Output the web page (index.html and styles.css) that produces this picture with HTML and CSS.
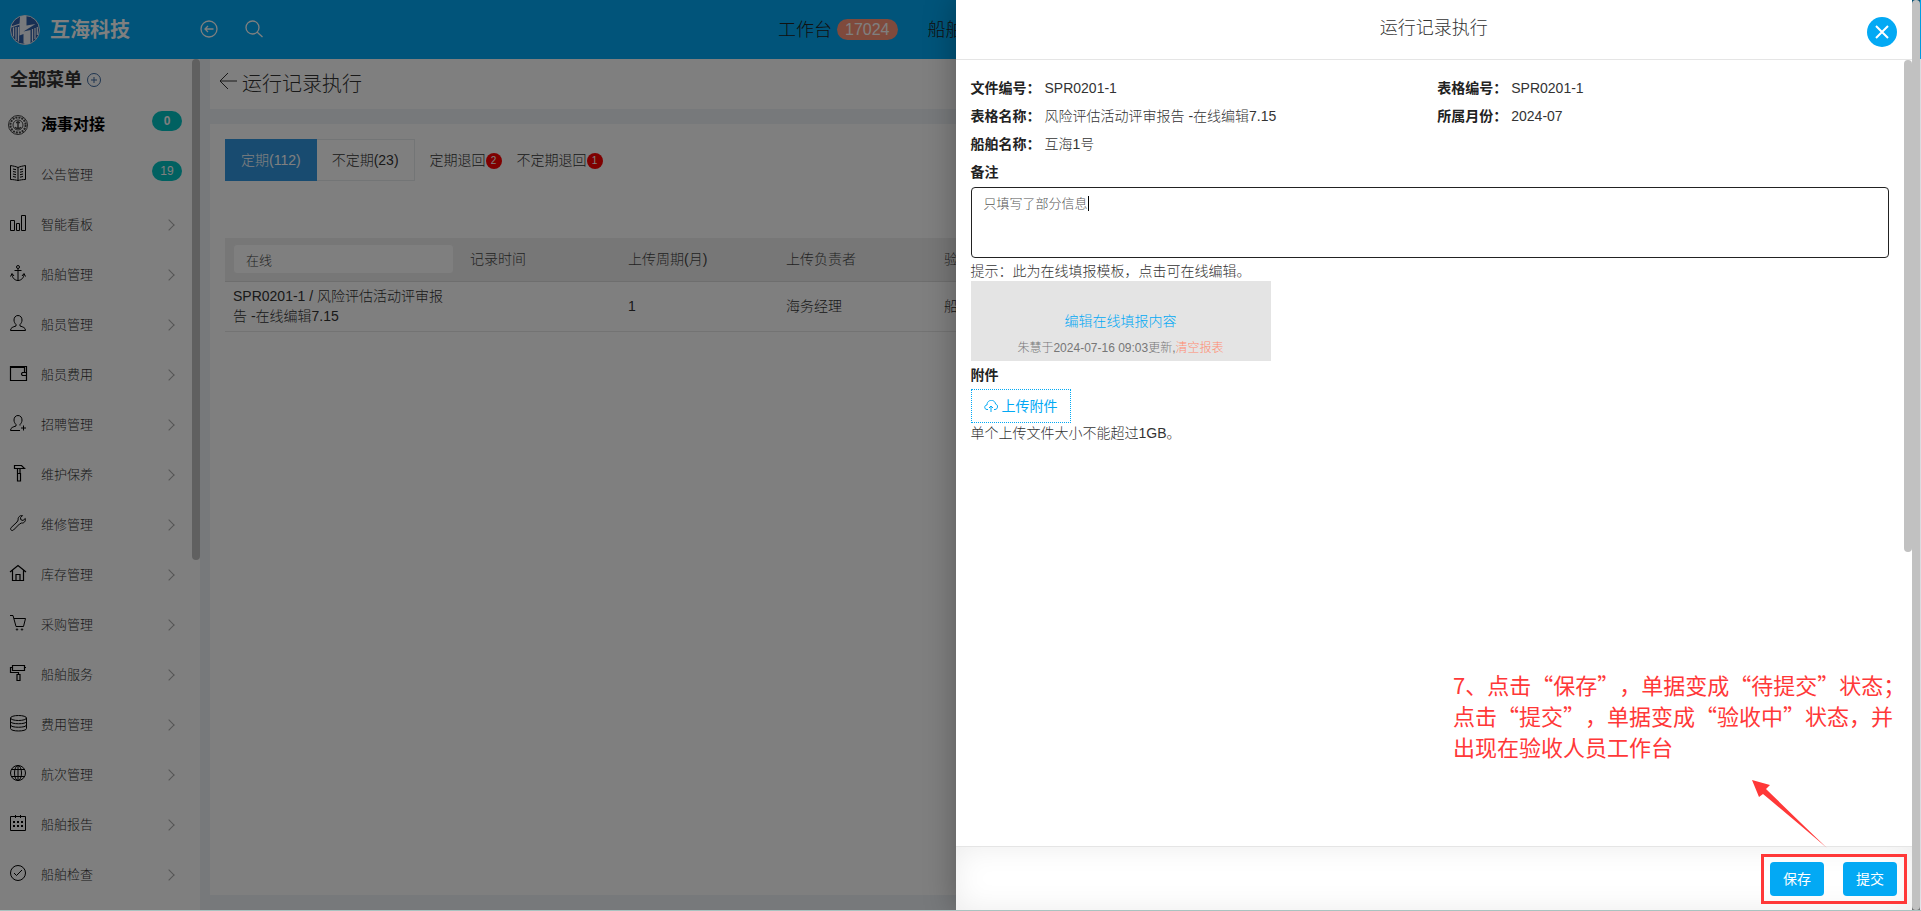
FILE: index.html
```html
<!DOCTYPE html>
<html lang="zh-CN">
<head>
<meta charset="utf-8">
<title>运行记录执行</title>
<link rel="stylesheet" href="styles.css">
</head>
<body>
<div class="app">
  <header class="topbar">
    <a class="brand" href="#">
      <svg class="brand-logo" viewBox="0 0 30 30" aria-hidden="true">
        <circle cx="15" cy="15" r="14.500" fill="#2f5fa8" stroke="#e3e8f0"/>
        <path d="M10 1.500Q13 .5 16.500 1v9.500l9-1.500-12 7.500L20.500 15v13.500Q17 30 13.500 28.500V19l-4 1.500V10z" fill="#f2f5fa"/>
        <path d="M1 12l9-3M3.500 12.500v9M6 12v13M8.500 12v14.500M22.500 14v12.500M25 13v11M27.300 12v8" stroke="#f2f5fa" stroke-width="1.200" fill="none"/>
      </svg>
      <span class="brand-name">互海科技</span>
    </a>
    <button class="top-btn" aria-label="收起菜单"><svg viewBox="0 0 18 18"><circle cx="9" cy="9" r="8"/><path d="M13.500 9H5M8 6L5 9l3 3"/></svg></button>
    <button class="top-btn" aria-label="搜索"><svg viewBox="0 0 18 18"><circle cx="7.500" cy="7.500" r="6.500"/><path d="M12 12l5.500 5"/></svg></button>
    <nav class="top-nav">
      <a href="#">工作台 <span class="pill">17024</span></a>
      <a href="#">船舶</a>
    </nav>
  </header>

  <div class="workspace">
    <aside class="sidebar">
      <div class="menu-head"><h2>全部菜单</h2>
        <button class="add-btn" aria-label="添加"><svg viewBox="0 0 14 14"><circle cx="7" cy="7" r="6.500"/><path d="M7 4v6M4 7h6"/></svg></button>
      </div>
      <ul class="menu">
        <li><a class="menu-item is-strong" href="#"><svg class="seal" viewBox="0 0 20 20"><circle cx="10" cy="10" r="9.500"/><circle cx="10" cy="10" r="7.600" stroke-dasharray="2 1" stroke-width="2"/><circle cx="10" cy="10" r="5"/><path d="M10 6v7M8 7.500h4M7 12c1 2 5 2 6 0" stroke-width="1.500"/></svg><span>海事对接</span><b class="count">0</b></a></li>
        <li><a class="menu-item" href="#"><svg viewBox="0 0 16 16"><path d="M8 2.500C6 1.500 3 1 .5 .5v14c3 0 5.500.5 7.500 1 2-.5 4.500-1 7.500-1V.5C13 1 10 1.500 8 2.500zM8 2.500v13M3 4l3 .7M3 6.500l3 .7M3 9l3 .7M3 11.500l3 .7M13 4l-3 .7M13 6.500l-3 .7M13 9l-3 .7M13 11.500l-3 .7"/></svg><span>公告管理</span><b class="count">19</b></a></li>
        <li><a class="menu-item" href="#"><svg viewBox="0 0 16 16"><path d="M.5 5.500h4v10h-4zM6.500 8.500h3v7h-3zM11.500.5h4v15h-4z"/></svg><span>智能看板</span><i class="chevron"></i></a></li>
        <li><a class="menu-item" href="#"><svg viewBox="0 0 16 16"><circle cx="8" cy="2" r="1.500"/><path d="M8 3.500v12M4.500 5.500h7M.5 11.500l1.500-3 2 2.500M15.500 11.500l-1.500-3-2 2.500M2 9c0 4 3 6.500 6 6.500s6-2.500 6-6.500"/></svg><span>船舶管理</span><i class="chevron"></i></a></li>
        <li><a class="menu-item" href="#"><svg viewBox="0 0 16 16"><path d="M8 .5C5.500.5 4 2.500 4 5c0 2 1 3.500 2 4.500v1.500c-3 1-5.500 1.500-5.500 4.500h15c0-3-2.500-3.500-5.500-4.500V9.500c1-1 2-2.500 2-4.500C12 2.500 10.500.5 8 .5z"/></svg><span>船员管理</span><i class="chevron"></i></a></li>
        <li><a class="menu-item" href="#"><svg viewBox="0 0 16 16"><path d="M.5 2.500V1.500h16v14H.5v-13h14v5M17 7.500h-4.500q-2 1.500 0 3h3.500" stroke-width="1.200"/></svg><span>船员费用</span><i class="chevron"></i></a></li>
        <li><a class="menu-item" href="#"><svg viewBox="0 0 16 16"><path d="M10 15.500H.5c0-3 2.500-3.500 5.500-4.500V9.500C5 8.500 4 7 4 5 4 2.500 5.500.5 8 .5S12 2.500 12 5c0 2-1 3.500-2 4.500v1M13.500 10.500v5M11 13h5"/></svg><span>招聘管理</span><i class="chevron"></i></a></li>
        <li><a class="menu-item" href="#"><svg viewBox="0 0 16 16"><path d="M4.500.5h7l3 3H4.500zM7.500 3.500v5h2.500v-5M7.500 8.500h3v7.500h-3z" stroke-width="1.200"/></svg><span>维护保养</span><i class="chevron"></i></a></li>
        <li><a class="menu-item" href="#"><svg viewBox="0 0 16 16"><path d="M12.500.6C10 0 7.500 2.500 8.200 5L7 7l-5.800 5.500c-1.800 2 .8 4 2.300 2.500l6-6L11.500 8c2.500.5 4.500-2 3.800-4.500L13 5.500l-2.200-.8-.3-2z"/></svg><span>维修管理</span><i class="chevron"></i></a></li>
        <li><a class="menu-item" href="#"><svg viewBox="0 0 16 16"><path d="M0 7L8 .5 16 7M2.500 5.500v10h11v-10M6 15.500v-6h4v6" stroke-width="1.200"/></svg><span>库存管理</span><i class="chevron"></i></a></li>
        <li><a class="menu-item" href="#"><svg viewBox="0 0 16 16"><path d="M0 .5h3l3 11h7.500l2-8H4"/><circle cx="7" cy="14.500" r=".7"/><circle cx="12" cy="14.500" r=".7"/></svg><span>采购管理</span><i class="chevron"></i></a></li>
        <li><a class="menu-item" href="#"><svg viewBox="0 0 16 16"><path d="M2.500.5h12v5h-12zM14.500 2.500H16M2.500 2.500h-2v5h8v2M7 9.500h3v6H7z" stroke-width="1.200"/></svg><span>船舶服务</span><i class="chevron"></i></a></li>
        <li><a class="menu-item" href="#"><svg viewBox="0 0 16 16"><ellipse cx="8.500" cy="3" rx="8" ry="2.500"/><path d="M.5 3v10.500c0 3.300 16 3.300 16 0V3M.5 6.500c0 3 16 3 16 0M.5 10c0 3 16 3 16 0"/></svg><span>费用管理</span><i class="chevron"></i></a></li>
        <li><a class="menu-item" href="#"><svg viewBox="0 0 16 16"><circle cx="8" cy="8" r="7.500"/><ellipse cx="8" cy="8" rx="3.500" ry="7.500"/><path d="M8 .5v15M1.500 4.500h13M1.500 11.500h13"/></svg><span>航次管理</span><i class="chevron"></i></a></li>
        <li><a class="menu-item" href="#"><svg viewBox="0 0 16 16"><path d="M.5 1.500h15v14H.5zM5.500 0v3M10.500 0v3"/><path d="M3 7h2M7 7h2M11 7h2M3 11h2M7 11h2M11 11h2" stroke-width="2"/></svg><span>船舶报告</span><i class="chevron"></i></a></li>
        <li><a class="menu-item" href="#"><svg viewBox="0 0 16 16"><circle cx="8" cy="8" r="7.500"/><path d="M4 8l2.500 2.500 5.500-5.500"/></svg><span>船舶检查</span><i class="chevron"></i></a></li>
      </ul>
      <span class="thumb thumb-menu"></span>
    </aside>

    <main class="content">
      <section class="card title-card">
        <a class="back" href="#" aria-label="返回"><svg viewBox="0 0 18 18"><path d="M18 9H1M9 1L1 9l8 8"/></svg></a>
        <h1>运行记录执行</h1>
      </section>
      <section class="card list-card">
        <div class="tabs">
          <button class="tab is-active">定期(112)</button>
          <button class="tab">不定期(23)</button>
          <a class="tab-link" href="#">定期退回<b>2</b></a>
          <a class="tab-link" href="#">不定期退回<b>1</b></a>
        </div>
        <table class="grid">
          <colgroup><col class="col-name"><col class="col"><col class="col"><col class="col"><col></colgroup>
          <thead><tr>
            <th><input type="text" value="在线" aria-label="表格名称"></th>
            <th>记录时间</th><th>上传周期(月)</th><th>上传负责者</th><th>验收</th>
          </tr></thead>
          <tbody><tr>
            <td>SPR0201-1 / 风险评估活动评审报告 -在线编辑7.15</td>
            <td></td><td>1</td><td>海务经理</td><td>船舶</td>
          </tr></tbody>
        </table>
      </section>
    </main>
  </div>

  <div class="backdrop"></div>

  <section class="drawer" role="dialog" aria-labelledby="drawer-title">
    <header class="drawer-head">
      <h2 id="drawer-title">运行记录执行</h2>
      <button class="close" aria-label="关闭"><svg viewBox="0 0 14 14"><path d="M1 1l12 12M13 1L1 13"/></svg></button>
    </header>
    <div class="drawer-body">
      <dl class="facts">
        <div><dt>文件编号：</dt><dd>SPR0201-1</dd></div>
        <div><dt>表格编号：</dt><dd>SPR0201-1</dd></div>
        <div><dt>表格名称：</dt><dd>风险评估活动评审报告 -在线编辑7.15</dd></div>
        <div><dt>所属月份：</dt><dd>2024-07</dd></div>
        <div><dt>船舶名称：</dt><dd>互海1号</dd></div>
      </dl>
      <label class="field-label" for="remark">备注</label>
      <div class="remark-wrap">
        <textarea id="remark" class="remark">只填写了部分信息</textarea>
        <span class="caret"></span>
      </div>
      <p class="hint">提示：此为在线填报模板，点击可在线编辑。</p>
      <div class="report">
        <a class="report-edit" href="#">编辑在线填报内容</a>
        <p>朱慧于2024-07-16 09:03更新,<a class="report-clear" href="#">清空报表</a></p>
      </div>
      <h3 class="field-label">附件</h3>
      <button class="upload"><svg viewBox="0 0 14 12"><path d="M4 9.500H3C0 9.500 0 5 3 5c0-6 8-6 8.500-1 3 .5 2.500 5.500-.5 5.500h-1M7 12V6M5 8l2-2 2 2"/></svg>上传附件</button>
      <p class="limit">单个上传文件大小不能超过1GB。</p>
      <span class="thumb thumb-drawer"></span>
    </div>
    <footer class="drawer-foot">
      <button class="primary">保存</button>
      <button class="primary">提交</button>
    </footer>
    <p class="note">7、点击“保存”，单据变成“待提交”状态；<br>点击“提交”，单据变成“验收中”状态，并<br>出现在验收人员工作台</p>
    <svg class="note-arrow" viewBox="0 0 75 69" aria-hidden="true"><path d="M0 0L18 5l-4 4Q48 42 75 68Q40 38 11 14l-4 3z"/></svg>
    <span class="note-frame"></span>
  </section>
  <span class="thumb thumb-page"></span>
</div>
</body>
</html>
```

FILE: styles.css
```css
* { box-sizing: border-box; }

body {
  margin: 0;
  font: 300 14px/20px "Liberation Sans", "Noto Sans CJK SC", sans-serif;
  color: #333;
}

h1, h2, h3, p, ul, dl, dd { margin: 0; padding: 0; }
a { color: inherit; text-decoration: none; }
button, input, textarea { font: inherit; color: inherit; }
button { padding: 0; border: 0; background: none; cursor: pointer; }
svg { display: block; fill: none; stroke: currentColor; }

.app {
  position: relative;
  display: flex;
  flex-direction: column;
  height: 100vh;
  overflow: hidden;
  border-bottom: 1px solid #a9c3c0;
}

/* top bar */
.topbar {
  display: flex;
  align-items: center;
  flex: none;
  height: 59px;
  padding: 0 10px;
  background: #03a9f4;
  color: #fff;
}
.brand { display: flex; align-items: center; gap: 10px; width: 190px; }
.brand-logo { width: 30px; height: 30px; stroke: none; }
.brand-name { font-size: 20px; font-weight: 700; line-height: 30px; }
.top-btn { width: 18px; margin: 0 27px 2px 0; stroke-width: 1.3; }
.top-nav {
  display: flex;
  gap: 30px;
  margin-left: 488px;
  font-size: 18px;
  line-height: 30px;
  color: #222;
}
.top-nav a { display: flex; align-items: center; gap: 5px; }
.pill {
  padding: 0 8px;
  border-radius: 12px;
  background: #ff9478;
  color: #fff;
  font-size: 16px;
  font-weight: 400;
  line-height: 21px;
}

/* side menu */
.workspace { display: flex; flex: 1; min-height: 0; background: #eff2f7; }
.sidebar { position: relative; flex: none; width: 200px; overflow: hidden; background: #fff; }
.menu-head { display: flex; align-items: center; gap: 5px; height: 41px; padding: 1px 10px 0; }
.menu-head h2 { font-size: 18px; line-height: 24px; }
.add-btn { width: 14px; color: #3f6aa0; }
.menu { list-style: none; }
.menu-item { display: flex; align-items: center; height: 50px; padding: 0 25px 0 10px; font-size: 13px; color: #333; }
.menu-item svg { width: 16px; height: 16px; margin: 0 15px 5px 0; overflow: visible; color: #000; }
.menu-item span { flex: 1; }
.is-strong { padding-left: 8px; font-size: 16px; font-weight: 700; color: #000; }
.is-strong .seal { width: 20px; height: 20px; margin: 0 13px 0 0; color: #444; }
.count {
  width: 30px;
  margin: 0 -7px 9px 0;
  border-radius: 10px;
  background: #03c2c2;
  color: #fff;
  font-size: 12px;
  line-height: 20px;
  text-align: center;
}
.chevron { width: 8px; height: 8px; margin-right: 2px; border: solid #aaa; border-width: 1px 1px 0 0; transform: rotate(45deg); }

.thumb { position: absolute; width: 8px; border-radius: 4px; background: #c1c1c1; }
.thumb-menu { top: 0; right: 0; height: 501px; }
.thumb-drawer { top: 0; right: 0; height: 492px; }
.thumb-page { top: 0; right: 1px; bottom: 0; }

/* content */
.content { display: flex; flex: 1; flex-direction: column; gap: 15px; min-width: 0; padding: 0 19px 15px 10px; }
.card { background: #fff; }
.title-card { display: flex; align-items: center; gap: 5px; height: 50px; padding: 0 9px; }
.title-card h1 { font-size: 20px; font-weight: 300; line-height: 30px; }
.back { width: 18px; margin-bottom: 6px; }
.list-card { flex: 1; padding: 15px; }
.tabs { display: flex; align-items: center; height: 42px; margin-bottom: 57px; }
.tab { height: 42px; padding: 0 15px; border: 1px solid #e7eaec; border-left: 0; }
.tab.is-active { padding: 0 16px; border: 0; background: #3097e1; color: #fff; }
.tab-link { display: flex; align-items: center; margin-left: 15px; }
.tab-link b {
  width: 16px;
  margin-top: 2px;
  border-radius: 8px;
  background: #f00;
  color: #fff;
  font-size: 10px;
  line-height: 16px;
  text-align: center;
}

.grid { width: 100%; border-collapse: collapse; table-layout: fixed; text-align: left; }
.col-name { width: 237px; }
.col { width: 158px; }
.grid th { height: 43px; padding: 0 8px; border-bottom: 1px solid #ddd; background: #efefef; font-weight: 300; color: #444; }
.grid td { height: 50px; padding: 4px 8px 5px; border-bottom: 1px solid #e7e7e7; }
.grid th input { display: block; width: 100%; height: 30px; padding: 0 12px; border: 1px solid #eee; border-radius: 4px; background: #fff; font-size: 13px; }

.backdrop { position: absolute; inset: 0 1px 0 0; background: rgba(0, 0, 0, .5); }

/* drawer */
.drawer {
  position: absolute;
  top: 0;
  right: 9px;
  bottom: 0;
  display: flex;
  flex-direction: column;
  width: 50%;
  max-width: calc(50% - 4px);
  background: #fff;
  box-shadow: 0 0 30px rgba(0, 0, 0, .3);
}
.drawer-head { position: relative; flex: none; height: 60px; padding: 13px 0; border-bottom: 1px solid #e5e5e5; }
.drawer-head h2 { font-size: 18px; font-weight: 300; line-height: 30px; text-align: center; }
.close {
  position: absolute;
  top: 17px;
  right: 15px;
  display: grid;
  place-items: center;
  width: 30px;
  height: 30px;
  border-radius: 50%;
  background: #03a9f4;
  color: #fff;
}
.close svg { width: 14px; stroke-width: 2; }
.drawer-body { position: relative; flex: 1; padding: 14px 23px 0 15px; }
.facts { display: grid; grid-template-columns: 1fr 1fr; column-gap: 15px; }
.facts div { display: flex; gap: 4px; line-height: 28px; }
.facts dt, .field-label { font-size: 14px; font-weight: 700; line-height: 28px; color: #222; }
.field-label { display: block; }
.remark-wrap { position: relative; margin-top: 1px; }
.remark {
  display: block;
  width: 100%;
  height: 71px;
  padding: 6px 12px;
  border: 1px solid #222;
  border-radius: 4px;
  outline: 0;
  resize: none;
  font-size: 13px;
  color: #555;
}
.caret { position: absolute; top: 9px; left: 117px; width: 1px; height: 15px; background: #000; }
.hint { padding-top: 3px; }
.report { width: 300px; height: 80px; padding: 30px 0 0; background: #e4e4e4; text-align: center; }
.report-edit { display: block; color: #03a9f4; }
.report p { margin-top: 7px; font-size: 12px; color: #777; }
.report-clear { color: #ff8a70; }
.upload {
  display: flex;
  align-items: center;
  justify-content: center;
  gap: 4px;
  width: 100px;
  height: 34px;
  border: 1px dotted #03a9f4;
  font-weight: 400;
  color: #03a9f4;
}
.upload svg { width: 14px; }
.drawer-foot {
  display: flex;
  flex: none;
  justify-content: flex-end;
  gap: 19px;
  height: 64px;
  padding: 15px;
  border-top: 1px solid #e5e5e5;
  box-shadow: inset 0 0 30px rgba(0, 0, 0, .08);
}
.primary { width: 54px; height: 34px; border-radius: 4px; background: #03a9f4; color: #fff; font-weight: 400; }

/* callout over the drawer */
.note {
  position: absolute;
  right: 0;
  bottom: 148px;
  width: 459px;
  font: 400 22px/31px "Noto Sans CJK SC", sans-serif;
  text-spacing-trim: space-all;
  color: #ff3838;
  white-space: nowrap;
}
.note-arrow { position: absolute; right: 85px; bottom: 61px; width: 75px; fill: #ff3838; stroke: none; }
.note-frame { position: absolute; right: 5px; bottom: 6px; width: 146px; height: 50px; border: 3px solid #ff3838; pointer-events: none; }
```
